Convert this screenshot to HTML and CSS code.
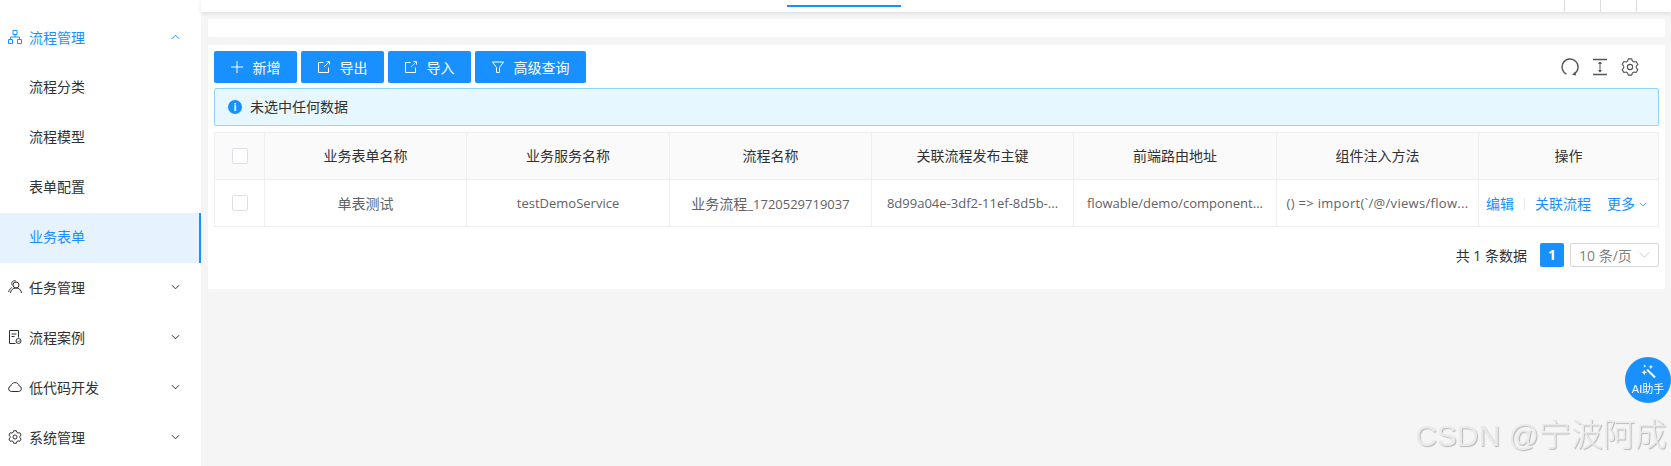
FILE: index.html
```html
<!DOCTYPE html>
<html lang="zh-CN">
<head>
    <meta charset="UTF-8">
    <title>业务表单</title>
    <link rel="stylesheet" href="styles.css">
</head>
<body>
    <aside class="sidebar">
        <div class="menu-row is-open">
            <svg class="menu-icon" viewBox="0 0 14 14"><path d="M5 .5h4v4H5zM.5 9.500h4v4h-4zM9.500 9.500h4v4h-4zM2.500 9.500V7h9v2.500M7 4.500V7" fill="none" stroke="currentColor"/></svg>
            <span class="menu-label">流程管理</span>
            <svg class="chevron" viewBox="0 0 10 6"><path d="M1 5l4-4 4 4" fill="none" stroke="currentColor" stroke-width="1.100"/></svg>
        </div>
        <div class="submenu-row">流程分类</div>
        <div class="submenu-row">流程模型</div>
        <div class="submenu-row">表单配置</div>
        <div class="submenu-row is-active">业务表单</div>
        <div class="menu-row">
            <svg class="menu-icon" viewBox="0 0 14 14"><circle cx="8" cy="5" r="3" fill="none" stroke="currentColor"/><path d="M2.500 13c.3-3 2.300-5 5.500-5s5.200 2 5.500 5M4.800 5.500C3.500 4.500 3.300 2.500 4.500 1.500 5.500.6 7 .5 8.200 1.300M3.800 7.500C2.200 8.500 1 10 .6 12" fill="none" stroke="currentColor"/></svg>
            <span class="menu-label">任务管理</span>
            <svg class="chevron" viewBox="0 0 10 6"><path d="M1 1l4 4 4-4" fill="none" stroke="currentColor" stroke-width="1.100"/></svg>
        </div>
        <div class="menu-row">
            <svg class="menu-icon" viewBox="0 0 14 14"><path d="M7.500 13.500h-6V.5h9v7M3.500 4h5M3.500 6.500h3" fill="none" stroke="currentColor"/><circle cx="10.500" cy="11" r="2.500" fill="none" stroke="currentColor"/><path d="M9.500 11l1 1 1.200-1.500" fill="none" stroke="currentColor" stroke-width=".8"/></svg>
            <span class="menu-label">流程案例</span>
            <svg class="chevron" viewBox="0 0 10 6"><path d="M1 1l4 4 4-4" fill="none" stroke="currentColor" stroke-width="1.100"/></svg>
        </div>
        <div class="menu-row">
            <svg class="menu-icon" viewBox="0 0 14 14"><path d="M3.300 11.500a2.800 2.800 0 0 1-.6-5.500C3.300 3.900 5 2.600 7 2.600s3.700 1.300 4.300 3.400a2.800 2.800 0 0 1-.6 5.500z" fill="none" stroke="currentColor"/></svg>
            <span class="menu-label">低代码开发</span>
            <svg class="chevron" viewBox="0 0 10 6"><path d="M1 1l4 4 4-4" fill="none" stroke="currentColor" stroke-width="1.100"/></svg>
        </div>
        <div class="menu-row">
            <svg class="menu-icon" viewBox="0 0 24 24"><path d="M9.710 1.240h4.580l.89 2.880 2.050 1.180 2.940-.66 2.290 3.960-2.040 2.220v2.360l2.040 2.220-2.290 3.960-2.940-.66-2.050 1.180-.89 2.880H9.710l-.89-2.880-2.050-1.180-2.940.66-2.290-3.960 2.040-2.220v-2.360L1.540 8.600l2.290-3.960 2.940.66 2.050-1.180z" fill="none" stroke="currentColor" stroke-width="1.700" stroke-linejoin="round"/><circle cx="12" cy="12" r="3.500" fill="none" stroke="currentColor" stroke-width="1.700"/></svg>
            <span class="menu-label">系统管理</span>
            <svg class="chevron" viewBox="0 0 10 6"><path d="M1 1l4 4 4-4" fill="none" stroke="currentColor" stroke-width="1.100"/></svg>
        </div>
    </aside>

    <div class="main">
        <div class="topbar">
            <div class="tab-line"></div>
            <div class="top-actions">
                <span class="top-action"></span>
                <span class="top-action"></span>
                <span class="top-action"></span>
            </div>
        </div>

        <div class="search-strip"></div>

        <section class="card">
            <div class="toolbar">
                <div class="btn-group">
                    <button class="btn btn-add">
                        <svg class="btn-icon" viewBox="0 0 12 12"><path d="M6 0v12M0 6h12" stroke="currentColor" fill="none"/></svg>新增
                    </button>
                    <button class="btn">
                        <svg class="btn-icon" viewBox="0 0 12 12"><path d="M5.500 1.500h-5v10h10v-5M6 6l5-5M8.500.5h3v3" stroke="currentColor" fill="none"/></svg>导出
                    </button>
                    <button class="btn">
                        <svg class="btn-icon" viewBox="0 0 12 12"><path d="M5.500 1.500h-5v10h10v-5M6 6l5-5M8.500.5h3v3" stroke="currentColor" fill="none"/></svg>导入
                    </button>
                    <button class="btn btn-query">
                        <svg class="btn-icon" viewBox="0 0 12 12"><path d="M.5 1h11L7.500 6.500v5h-3v-5z" stroke="currentColor" fill="none"/></svg>高级查询
                    </button>
                </div>
                <div class="tools">
                    <svg class="tool-icon" viewBox="0 0 18 18"><path d="M5.500 16.200A8 8 0 1 1 13.500 15.700" fill="none" stroke="currentColor" stroke-width="1.400"/><path d="M11 16.800l4 .7-.4-4z" fill="currentColor"/></svg>
                    <svg class="tool-icon" viewBox="0 0 18 18"><path d="M2 1.500h14M2 16.500h14" stroke="currentColor" stroke-width="1.300" fill="none"/><path d="M9 4v10" stroke="currentColor" fill="none"/><path d="M7 6l2-2.500L11 6zM7 12l2 2.500 2-2.500z" fill="currentColor"/></svg>
                    <svg class="tool-icon" viewBox="0 0 24 24"><path d="M9.710 1.240h4.580l.89 2.880 2.050 1.180 2.940-.66 2.290 3.960-2.040 2.220v2.360l2.040 2.220-2.290 3.960-2.940-.66-2.050 1.180-.89 2.880H9.710l-.89-2.880-2.050-1.180-2.940.66-2.290-3.960 2.040-2.220v-2.360L1.540 8.600l2.290-3.960 2.940.66 2.050-1.180z" fill="none" stroke="currentColor" stroke-width="1.500" stroke-linejoin="round"/><circle cx="12" cy="12" r="3.500" fill="none" stroke="currentColor" stroke-width="1.500"/></svg>
                </div>
            </div>

            <div class="alert">
                <span class="alert-icon">i</span>
                <span class="alert-text">未选中任何数据</span>
            </div>

            <table class="data-table">
                <colgroup>
                    <col class="col-check">
                    <col class="col-a">
                    <col class="col-b">
                    <col class="col-c">
                    <col class="col-d">
                    <col class="col-e">
                    <col class="col-f">
                    <col class="col-g">
                </colgroup>
                <thead>
                    <tr>
                        <th><span class="checkbox"></span></th>
                        <th><span class="head-text">业务表单名称</span></th>
                        <th><span class="head-text">业务服务名称</span></th>
                        <th><span class="head-text">流程名称</span></th>
                        <th><span class="head-text">关联流程发布主键</span></th>
                        <th><span class="head-text">前端路由地址</span></th>
                        <th><span class="head-text">组件注入方法</span></th>
                        <th><span class="head-text">操作</span></th>
                    </tr>
                </thead>
                <tbody>
                    <tr>
                        <td><span class="checkbox"></span></td>
                        <td><span class="cjk">单表测试</span></td>
                        <td>testDemoService</td>
                        <td><span class="cjk">业务流程</span>_1720529719037</td>
                        <td>8d99a04e-3df2-11ef-8d5b-...</td>
                        <td>flowable/demo/component...</td>
                        <td class="code-cell">() =&gt; import(`/@/views/flow...</td>
                        <td class="actions">
                            <a>编辑</a><span class="divider"></span><a>关联流程</a><a class="more">更多<svg class="more-icon" viewBox="0 0 10 6"><path d="M1 1l4 4 4-4" fill="none" stroke="currentColor"/></svg></a>
                        </td>
                    </tr>
                </tbody>
            </table>

            <div class="pagination">
                <span class="total">共 1 条数据</span>
                <span class="page-num">1</span>
                <span class="page-size">10 条/页<svg class="size-icon" viewBox="0 0 12 7"><path d="M.5.5L6 6l5.500-5.500" fill="none" stroke="currentColor"/></svg></span>
            </div>
        </section>
    </div>

    <div class="ai-btn">
        <svg class="ai-icon" viewBox="0 0 16 16"><path d="M6.500 6L15 14.500" stroke="currentColor" stroke-width="2.200" fill="none"/><path d="M3.500 6l.9 2.100 2.100.9-2.100.9-.9 2.100-.9-2.100-2.100-.9 2.100-.9zM10.500.5l.7 1.800 1.800.7-1.800.7-.7 1.800-.7-1.800L8 3l1.800-.7zM4 .5l.5 1.200 1.200.5-1.200.5L4 3.900l-.5-1.200-1.200-.5 1.200-.5z" fill="currentColor"/></svg>
        <span>AI助手</span>
    </div>
    <div class="watermark"><span class="watermark-latin">CSDN @</span>宁波阿成</div>
</body>
</html>
```

FILE: styles.css
```css
/* Page */
html, body {
    height: 100%;
}

body {
    margin: 0;
    display: flex;
    overflow: hidden;
    background-color: #f5f5f5;
    color: #333;
    font-family: "Open Sans", "Noto Sans CJK SC", sans-serif;
    font-size: 14px;
}

/* Sidebar */
.sidebar {
    width: 201px;
    flex-shrink: 0;
    padding-top: 13px;
    background-color: #fff;
    box-sizing: border-box;
}

.menu-row {
    height: 50px;
    display: flex;
    align-items: center;
    padding: 0 21px 2px 8px;
    box-sizing: border-box;
    color: #303133;
}

.menu-row.is-open {
    color: #1890ff;
}

.menu-icon {
    width: 14px;
    height: 14px;
    margin-right: 7px;
    flex-shrink: 0;
}

.menu-label {
    flex: 1;
}

.chevron {
    width: 9px;
    height: 6px;
}

.submenu-row {
    height: 50px;
    line-height: 48px;
    padding-left: 29px;
    color: #303133;
}

.submenu-row.is-active {
    color: #1890ff;
    background-color: #e6f2fe;
    border-right: 2px solid #1890ff;
}

/* Main area */
.main {
    flex: 1;
    min-width: 0;
}

.topbar {
    height: 12px;
    display: flex;
    justify-content: space-between;
    background-color: #fff;
    box-shadow: 0 1px 4px rgba(0, 21, 41, 0.12);
}

.tab-line {
    width: 114px;
    height: 2px;
    margin: 5px 0 0 586px;
    background-color: #1890ff;
}

.top-actions {
    display: flex;
    margin-right: -1px;
}

.top-action {
    width: 36px;
    border-left: 1px solid #ddd;
    box-sizing: border-box;
}

.search-strip {
    height: 18px;
    margin: 7px 6px 0 7px;
    background-color: #fff;
    border-radius: 2px;
}

.card {
    height: 244px;
    margin: 8px 6px 0 7px;
    padding: 6px;
    background-color: #fff;
    border-radius: 2px;
    box-sizing: border-box;
}

/* Toolbar */
.toolbar {
    display: flex;
    justify-content: space-between;
    align-items: center;
}

.btn-group {
    display: flex;
    gap: 4px;
}

.btn {
    height: 32px;
    width: 83px;
    padding: 0;
    display: flex;
    align-items: center;
    justify-content: center;
    gap: 10px;
    border: none;
    border-radius: 2px;
    background-color: #1890ff;
    color: #fff;
    font-family: inherit;
    font-size: 14px;
}

.btn-query {
    width: 111px;
}

.btn-icon {
    width: 12px;
    height: 12px;
}

.tools {
    display: flex;
    gap: 12px;
    margin-right: 20px;
    color: #555;
}

.tool-icon {
    width: 18px;
    height: 18px;
}

/* Alert */
.alert {
    height: 38px;
    margin-top: 5px;
    display: flex;
    align-items: center;
    padding-left: 13px;
    border: 1px solid #91d5ff;
    border-radius: 2px;
    background-color: #e6f7ff;
    box-sizing: border-box;
    color: #303133;
}

.alert-icon {
    width: 14px;
    height: 14px;
    margin-right: 8px;
    border-radius: 50%;
    background-color: #1890ff;
    color: #fff;
    font-size: 10px;
    font-weight: 700;
    line-height: 14px;
    text-align: center;
}

.alert-text {
    margin-bottom: 2px;
}

/* Table */
.data-table {
    width: 1445px;
    margin-top: 6px;
    border-collapse: collapse;
    table-layout: fixed;
}

.col-check { width: 50px; }
.col-a { width: 202px; }
.col-b { width: 203px; }
.col-c { width: 202px; }
.col-d { width: 202px; }
.col-e { width: 203px; }
.col-f { width: 202px; }

.data-table th,
.data-table td {
    border: 1px solid #efefef;
    padding: 0 7px;
    text-align: center;
    white-space: nowrap;
    overflow: hidden;
}

.data-table th {
    height: 46px;
    background-color: #fafafa;
    color: #303133;
    font-weight: 400;
}

.head-text {
    display: block;
    margin-bottom: 2px;
}

.data-table td {
    height: 46px;
    color: #606266;
    font-size: 13px;
}

.cjk {
    font-size: 14px;
}

.data-table td.code-cell {
    letter-spacing: 0.3px;
}

.checkbox {
    display: block;
    width: 14px;
    height: 14px;
    margin: 0 auto;
    border: 1px solid #dcdfe6;
    border-radius: 2px;
    background-color: #fff;
}

.data-table td.actions {
    text-align: left;
    color: #1890ff;
    font-size: 14px;
}

.divider {
    display: inline-block;
    width: 1px;
    height: 12px;
    margin: 0 10px;
    background-color: #e8e8e8;
    vertical-align: -1px;
}

.more {
    margin-left: 16px;
}

.more-icon {
    width: 8px;
    height: 5px;
    margin-left: 4px;
    vertical-align: 2px;
}

/* Pagination */
.pagination {
    margin-top: 16px;
    display: flex;
    align-items: center;
    justify-content: flex-end;
}

.total {
    margin-right: 13px;
    color: #303133;
}

.page-num {
    width: 24px;
    height: 24px;
    margin-right: 6px;
    border-radius: 2px;
    background-color: #1890ff;
    color: #fff;
    font-weight: 700;
    line-height: 24px;
    text-align: center;
}

.page-size {
    width: 89px;
    height: 24px;
    padding: 0 8px;
    display: flex;
    align-items: center;
    justify-content: space-between;
    border: 1px solid #d9d9d9;
    border-radius: 2px;
    box-sizing: border-box;
    color: #808080;
}

.size-icon {
    width: 11px;
    height: 6px;
    color: #c0c4cc;
}

/* Floating items */
.ai-btn {
    position: fixed;
    left: 1625px;
    top: 357px;
    width: 46px;
    height: 46px;
    display: flex;
    flex-direction: column;
    align-items: center;
    justify-content: center;
    border-radius: 50%;
    background-color: #1890ff;
    color: #fff;
    font-family: "Liberation Sans", "Noto Sans CJK SC", sans-serif;
    font-size: 11px;
    line-height: 14px;
}

.ai-icon {
    width: 15px;
    height: 15px;
    margin-bottom: 3px;
}

.watermark {
    position: fixed;
    right: 4px;
    bottom: 12px;
    color: #eaeaea;
    font-family: "Liberation Sans", "Noto Sans CJK SC", sans-serif;
    font-size: 32px;
    font-weight: 300;
    line-height: 36px;
    text-shadow: 1px 1px 1px #b8b8b8;
}

.watermark-latin {
    font-size: 30px;
}
```
